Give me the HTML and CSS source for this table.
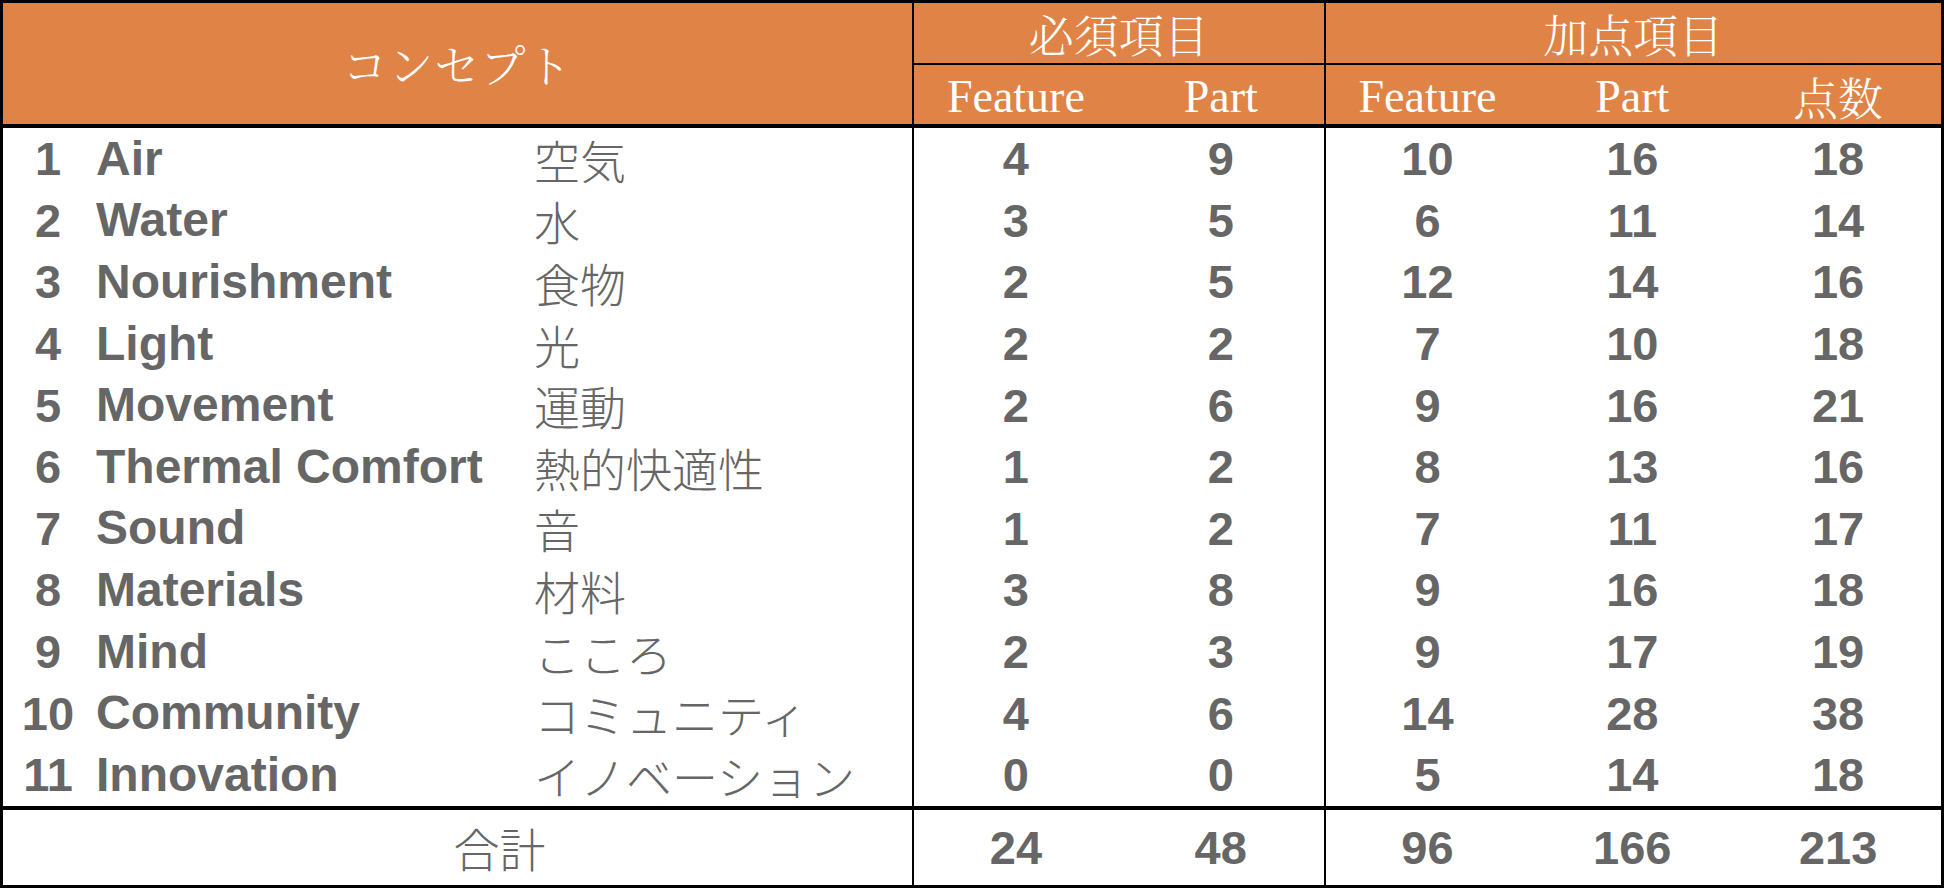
FILE: index.html
```html
<!DOCTYPE html>
<html lang="ja">
<head>
<meta charset="utf-8">
<title>WELL コンセプト</title>
<link rel="stylesheet" href="styles.css">
</head>
<body>
<table class="well">
  <colgroup>
    <col class="c-num"><col class="c-en"><col class="c-jp">
    <col class="c-val"><col class="c-val"><col class="c-val"><col class="c-val"><col class="c-val">
  </colgroup>
  <thead>
    <tr class="h1">
      <th colspan="3" rowspan="2" class="concept">コンセプト</th>
      <th colspan="2" class="grp sec">必須項目</th>
      <th colspan="3" class="grp sec">加点項目</th>
    </tr>
    <tr class="h2">
      <th class="sub sec">Feature</th>
      <th class="sub">Part</th>
      <th class="sub sec">Feature</th>
      <th class="sub">Part</th>
      <th class="sub jp-h">点数</th>
    </tr>
  </thead>
  <tbody>
    <tr><td class="num">1</td><td class="en">Air</td><td class="jp">空気</td><td class="v sec">4</td><td class="v">9</td><td class="v sec">10</td><td class="v">16</td><td class="v">18</td></tr>
    <tr><td class="num">2</td><td class="en">Water</td><td class="jp">水</td><td class="v sec">3</td><td class="v">5</td><td class="v sec">6</td><td class="v">11</td><td class="v">14</td></tr>
    <tr><td class="num">3</td><td class="en">Nourishment</td><td class="jp">食物</td><td class="v sec">2</td><td class="v">5</td><td class="v sec">12</td><td class="v">14</td><td class="v">16</td></tr>
    <tr><td class="num">4</td><td class="en">Light</td><td class="jp">光</td><td class="v sec">2</td><td class="v">2</td><td class="v sec">7</td><td class="v">10</td><td class="v">18</td></tr>
    <tr><td class="num">5</td><td class="en">Movement</td><td class="jp">運動</td><td class="v sec">2</td><td class="v">6</td><td class="v sec">9</td><td class="v">16</td><td class="v">21</td></tr>
    <tr><td class="num">6</td><td class="en">Thermal Comfort</td><td class="jp">熱的快適性</td><td class="v sec">1</td><td class="v">2</td><td class="v sec">8</td><td class="v">13</td><td class="v">16</td></tr>
    <tr><td class="num">7</td><td class="en">Sound</td><td class="jp">音</td><td class="v sec">1</td><td class="v">2</td><td class="v sec">7</td><td class="v">11</td><td class="v">17</td></tr>
    <tr><td class="num">8</td><td class="en">Materials</td><td class="jp">材料</td><td class="v sec">3</td><td class="v">8</td><td class="v sec">9</td><td class="v">16</td><td class="v">18</td></tr>
    <tr><td class="num">9</td><td class="en">Mind</td><td class="jp">こころ</td><td class="v sec">2</td><td class="v">3</td><td class="v sec">9</td><td class="v">17</td><td class="v">19</td></tr>
    <tr><td class="num">10</td><td class="en">Community</td><td class="jp">コミュニティ</td><td class="v sec">4</td><td class="v">6</td><td class="v sec">14</td><td class="v">28</td><td class="v">38</td></tr>
    <tr><td class="num">11</td><td class="en">Innovation</td><td class="jp">イノベーション</td><td class="v sec">0</td><td class="v">0</td><td class="v sec">5</td><td class="v">14</td><td class="v">18</td></tr>
  </tbody>
  <tfoot>
    <tr><td colspan="3" class="total-label">合計</td><td class="v sec">24</td><td class="v">48</td><td class="v sec">96</td><td class="v">166</td><td class="v">213</td></tr>
  </tfoot>
</table>
</body>
</html>
```

FILE: styles.css
```css
html, body {
  margin: 0;
  padding: 0;
  background: #ffffff;
}

.well {
  width: 1944px;
  box-sizing: border-box;
  table-layout: fixed;
  border-collapse: separate;
  border-spacing: 0;
  border: 3px solid #000;
}

.c-num { width: 90px; }
.c-en { width: 441px; }
.c-jp { width: 378px; }
.c-val { width: 205.8px; }

.well th,
.well td {
  padding: 0;
  line-height: 1;
  vertical-align: middle;
}

/* header */
.well thead th {
  background: #df8346;
  color: #fff;
  font-weight: normal;
}

.well .h1 th { height: 60px; }
.well .h2 th { height: 55px; }

.well .concept {
  font-family: "Noto Serif CJK JP", "Noto Sans CJK JP", serif;
  font-weight: 300;
  font-size: 45px;
  letter-spacing: 1px;
  border-bottom: 4px solid #000;
}

.well .grp {
  font-family: "Noto Serif CJK JP", "Noto Sans CJK JP", serif;
  font-weight: 300;
  font-size: 45px;
  border-bottom: 2px solid #000;
}

.well .sub {
  font-family: "Liberation Serif", "Times New Roman", serif;
  font-size: 46px;
  border-bottom: 4px solid #000;
  padding-top: 4px;
}

.well .jp-h {
  font-family: "Noto Serif CJK JP", "Noto Sans CJK JP", serif;
  font-weight: 300;
  font-size: 45px;
}

.well .sec { border-left: 2px solid #000; }

/* body */
.well tbody td { height: 61.6px; }

.well .num,
.well .en,
.well .v {
  font-family: "Liberation Sans", Arial, sans-serif;
  font-weight: bold;
  font-size: 47px;
  color: #666;
}

.well .num { text-align: center; }

.well .en {
  text-align: left;
  padding-left: 3px;
  font-size: 48px;
  white-space: nowrap;
}

.well .jp {
  font-family: "Noto Sans CJK JP", sans-serif;
  font-weight: 300;
  font-size: 46px;
  color: #666;
  text-align: left;
  white-space: nowrap;
}

.well .v { text-align: center; }

/* footer */
.well tfoot td {
  border-top: 4px solid #000;
  height: 75px;
}

.well .total-label {
  font-family: "Noto Sans CJK JP", sans-serif;
  font-weight: 300;
  font-size: 46px;
  color: #666;
  text-align: center;
  padding-left: 84px;
}
```
